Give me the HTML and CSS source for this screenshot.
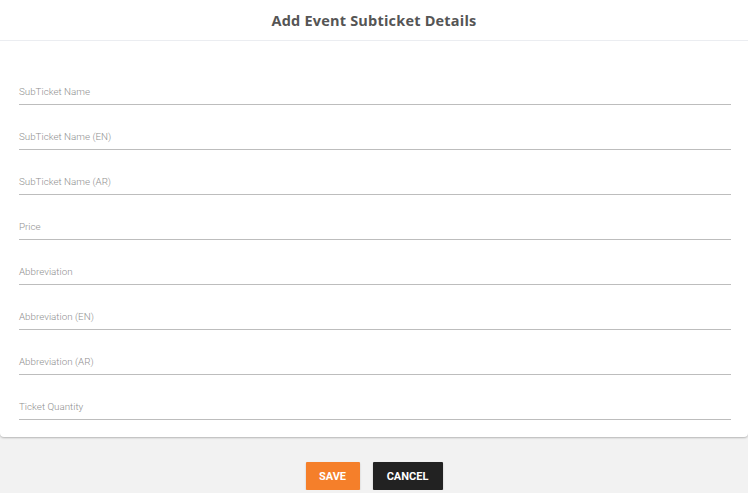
FILE: index.html
```html
<!DOCTYPE html>
<html>
<head>
<meta charset="utf-8">
<link rel="stylesheet" href="styles.css">
</head>
<body>
<div class="card">
  <div class="header"><h1 class="title">Add Event Subticket Details</h1></div>
  <form class="form">
    <div class="field"><span class="label">SubTicket Name</span></div>
    <div class="field"><span class="label">SubTicket Name (EN)</span></div>
    <div class="field"><span class="label">SubTicket Name (AR)</span></div>
    <div class="field"><span class="label">Price</span></div>
    <div class="field"><span class="label">Abbreviation</span></div>
    <div class="field"><span class="label">Abbreviation (EN)</span></div>
    <div class="field"><span class="label">Abbreviation (AR)</span></div>
    <div class="field"><span class="label">Ticket Quantity</span></div>
  </form>
</div>
<div class="actions">
  <button class="btn btn-save" type="button">SAVE</button>
  <button class="btn btn-cancel" type="button">CANCEL</button>
</div>
</body>
</html>
```
FILE: styles.css
```css
html, body {
  margin: 0;
  padding: 0;
  background: #f2f2f2;
  font-family: Roboto, "Liberation Sans", sans-serif;
}
.card {
  background: #ffffff;
  border-radius: 0 0 4px 4px;
  box-shadow: 0 1px 2px rgba(0,0,0,0.25);
}
.header {
  height: 40px;
  border-bottom: 1px solid #ebedf1;
  display: flex;
  align-items: center;
  justify-content: center;
}
.title {
  margin: 0;
  font-family: "Open Sans", sans-serif;
  font-weight: 700;
  font-size: 14.5px;
  color: #555555;
  letter-spacing: 0.2px;
}
.form {
  padding: 19px 17px 17px 19px;
  margin: 0;
}
.field {
  height: 44px;
  border-bottom: 1px solid #bdbdbd;
  display: flex;
  align-items: flex-end;
}
.label {
  font-size: 9.8px;
  line-height: 12px;
  font-weight: 300;
  color: #8f8f8f;
  padding-bottom: 6px;
}
.actions {
  display: flex;
  justify-content: center;
  gap: 13px;
  padding-top: 25px;
}
.btn {
  border: none;
  height: 28px;
  font-family: Roboto, "Liberation Sans", sans-serif;
  font-weight: 700;
  font-size: 11px;
  color: #ffffff;
  border-radius: 1px;
  box-shadow: 0 1px 2px rgba(0,0,0,0.2);
  padding: 0;
}
.btn-save {
  width: 54px;
  background: #f57f2a;
}
.btn-cancel {
  width: 70px;
  background: #222222;
}
```
